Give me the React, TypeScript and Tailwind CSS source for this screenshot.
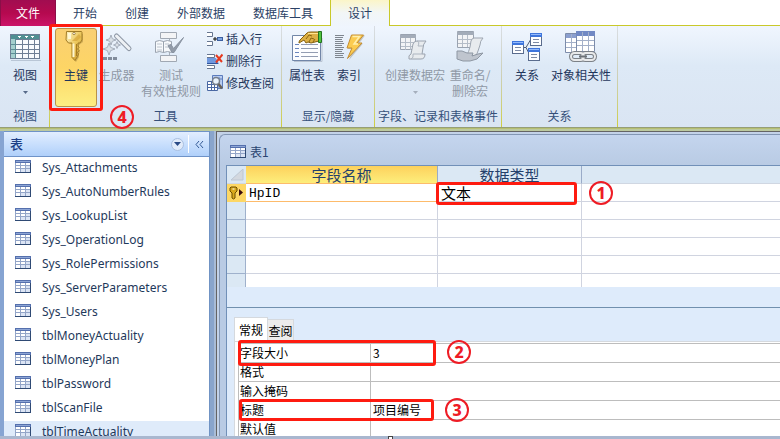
import { ReactNode } from 'react';
import clsx from 'clsx';

const tables = [
  'Sys_Attachments',
  'Sys_AutoNumberRules',
  'Sys_LookupList',
  'Sys_OperationLog',
  'Sys_RolePermissions',
  'Sys_ServerParameters',
  'Sys_Users',
  'tblMoneyActuality',
  'tblMoneyPlan',
  'tblPassword',
  'tblScanFile',
  'tblTimeActuality',
];

const menuTabs = ['开始', '创建', '外部数据', '数据库工具'];

/* ---------- icons ---------- */

function TableIcon() {
  return (
    <svg className="h-[14px] w-4 shrink-0" viewBox="0 0 16 14" shapeRendering="crispEdges">
      <rect width="16" height="13" fill="#93a5c8" />
      <rect width="16" height="3" fill="#5570ad" />
      <rect x="1" y="1" width="14" height="1" fill="#8ea6d6" />
      <path d="M1 3h4v2H1zM6 3h4v2H6zM11 3h4v2h-4zM1 6h4v2H1zM6 6h4v2H6zM1 9h4v3H1z" fill="#fff" />
      <path d="M11 6h4v2h-4zM6 9h4v3H6zM11 9h4v3h-4z" fill="#dbe4f4" />
      <path d="M0 12h16v1H0zM15 3h1v10h-1z" fill="#2f4a74" />
    </svg>
  );
}

function ViewIcon() {
  return (
    <svg className="h-8 w-8" viewBox="0 0 32 32" shapeRendering="crispEdges">
      <path d="M2 29h30V5" stroke="#b9c6d6" fill="none" />
      <rect x="1" y="3" width="30" height="25" fill="#6d7e95" />
      <rect x="2" y="4" width="28" height="4" fill="#4f8f92" />
      <rect x="2" y="8" width="4" height="19" fill="#a4cfce" />
      <path d="M6 9h7v4H6zM14 9h5v4h-5zM20 9h5v4h-5zM26 9h4v4h-4zM6 14h7v4H6zM14 14h5v4h-5zM20 14h5v4h-5zM26 14h4v4h-4zM6 19h7v3H6zM14 19h5v3h-5zM20 19h5v3h-5zM26 19h4v3h-4zM6 23h7v4H6zM14 23h5v4h-5zM20 23h5v4h-5zM26 23h4v4h-4z" fill="#f7fafd" />
      <path d="M6 8v19M2 13.500h4M2 18.500h4M2 22.500h4" stroke="#5d8f96" />
      <path d="M8 5h4l-2 2zM15 5h4l-2 2zM21 5h4l-2 2z" fill="#fff" />
    </svg>
  );
}

function KeyIcon() {
  return (
    <svg className="h-8 w-8" viewBox="0 0 32 32">
      <defs>
        <linearGradient id="gold" x1="0" y1="0" x2="1" y2="1">
          <stop offset="0" stopColor="#fdf3c4" />
          <stop offset="0.5" stopColor="#ecc75c" />
          <stop offset="1" stopColor="#c08d22" />
        </linearGradient>
      </defs>
      <path d="M7 3h16v8l-4 3v4l1 2-1 3v3l-3 5-3-3V14l-6-3z" fill="#a88a3c" opacity=".5" />
      <path d="M6.500.5h15l.5 1v7.500l-2 3h-2v3l1 1.500-1.500 1.500 1.500 1.500-1.500 2 1 1.500-1 2.500-2.500 4-3-3V12h-3.500l-2.500-3z" fill="url(#gold)" stroke="#a27c26" />
      <path d="M13.500 12.500V26" stroke="#fff6d0" strokeWidth="2" />
      <path d="M16.500 13v12" stroke="#a87b20" />
      <circle cx="14" cy="2.500" r="1.200" fill="#fff" stroke="#91702a" strokeWidth=".8" />
      <path d="M8 2h3v6H8z" fill="#fffbe4" opacity=".8" />
      <path d="M19 3l-7 7h5l4-4z" fill="#d6a53a" opacity=".7" />
    </svg>
  );
}

function BuilderIcon() {
  return (
    <svg className="h-8 w-8" viewBox="0 0 32 32">
      <path d="M15.500 5L28 17.500" stroke="#8f99a7" strokeWidth="5" strokeLinecap="round" />
      <path d="M15.500 5L28 17.500" stroke="#eef1f5" strokeWidth="3" strokeLinecap="round" />
      <path d="M10 4l1.300 3.700L15 9l-3.700 1.300L10 14l-1.300-3.700L5 9l3.700-1.300zM8 12l1.600 4.400L14 18l-4.400 1.600L8 24l-1.600-4.400L2 18l4.400-1.600zM16 10.500l1 2.500 2.500 1-2.500 1-1 2.500-1-2.500-2.500-1 2.500-1z" fill="#d9dfe6" stroke="#98a1ae" strokeWidth=".8" />
      <path d="M2 27.500h14" stroke="#828c9b" strokeWidth="3" strokeDasharray="4 1" />
    </svg>
  );
}

function TestIcon() {
  return (
    <svg className="h-8 w-8" viewBox="0 0 32 32">
      <path d="M14.500 8v16" stroke="#a7b0bb" />
      <path d="M5.500 1.500h16v6h-16zM5.500 24.500h16v6h-16z" fill="#f3f4f6" stroke="#a0a8b3" />
      <path d="M.5 10.500q4-2 8 0v11q-4-2-8 0zM8.500 10.500q4-2 8 0v11q-4-2-8 0z" fill="#f7f9fb" stroke="#9aa3af" />
      <path d="M2 13h5M2 16h5M2 19h5M10 13h4M10 16h4" stroke="#bcc4ce" />
      <path d="M13 14.500l3-1 2.500 4L28.500 6.500 19 21.500h-2z" fill="#939ca9" stroke="#8a94a2" />
    </svg>
  );
}

function InsertRowIcon() {
  return (
    <svg className="h-4 w-4" viewBox="0 0 16 16">
      <path d="M0 1.500h5.500v4H0M0 10.500h5.500v4H0" fill="#fff" stroke="#66758f" />
      <rect x="10.500" y="6.500" width="5" height="3" fill="#7fa6e2" stroke="#3d5f9f" />
      <path d="M6 8h4M8 6v4" stroke="#111" />
    </svg>
  );
}

function DeleteRowIcon() {
  return (
    <svg className="h-4 w-4" viewBox="0 0 16 16">
      <path d="M0 1.500h7.500v3H0M0 12.500h7.500v3H0" fill="#fff" stroke="#66758f" />
      <path d="M0 5h9l3 6H0z" fill="#6f98de" />
      <path d="M0 10.500h11" stroke="#31559c" />
      <path d="M9 2l6 7M15.500 1.500L9 9.500" stroke="#e5391f" strokeWidth="2" />
    </svg>
  );
}

function LookupIcon() {
  return (
    <svg className="h-4 w-4" viewBox="0 0 16 16">
      <path d="M5.500.5h10v13h-10z" fill="#b9cdf0" stroke="#5c7cbc" />
      <path d="M.5 6.500h10v9H.5zM.5 9.500h10M.5 12.500h10M4.500 7v8M7.500 7v8" fill="#fff" stroke="#4a68a3" />
      <path d="M12 2v11M6 4h9" stroke="#5c7cbc" />
      <circle cx="9" cy="6" r="3.500" fill="#e8f2fc" stroke="#777f8b" strokeWidth="1.500" />
      <path d="M11.500 9l3.500 4.500" stroke="#6b6257" strokeWidth="2.500" />
    </svg>
  );
}

function PropertyIcon() {
  return (
    <svg className="h-8 w-8" viewBox="0 0 32 32">
      <path d="M3 30.500h28V7" stroke="#b9c3d2" fill="none" />
      <path d="M1.500 4.500h28v25h-28z" fill="#fcfdff" stroke="#7186a8" />
      <path d="M4 13.500h4M4 17.500h4M4 21.500h4M4 25.500h4" stroke="#6a86bd" />
      <path d="M10 13.500h17M10 17.500h17M10 21.500h17M10 25.500h17" stroke="#929cb2" />
      <path d="M8 11l1-2 7-7q1-1 4-1h8v9l-4 1-4 1-3-1-2 1-2-3-5 3z" fill="#ddb044" stroke="#85600d" />
      <path d="M15 8l3-4 3 1M18 11l2-4 3 1M22 11l2-3" stroke="#8a6512" fill="none" />
      <path d="M17 2.500h10" stroke="#ffe591" />
      <path d="M27.500.5h3v11h-3z" fill="#4fc43f" stroke="#23731e" />
    </svg>
  );
}

function IndexIcon() {
  return (
    <svg className="h-8 w-8" viewBox="0 0 32 32">
      <path d="M2 4.500h9M2 6.500h8M2 8.500h7M2 10.500h8M2 12.500h9M2 14.500h7M2 16.500h9M2 18.500h8M2 20.500h7M2 22.500h9M2 24.500h8M2 26.500h9" stroke="#7f868f" />
      <path d="M19 4.500h13l-6 8h4L16 29l4-11h-5z" fill="#9a978b" opacity=".5" />
      <path d="M18.500 4h12L24 12h5L14.500 27.500 19 17h-5z" fill="#fbcb50" stroke="#c48d33" />
      <path d="M19.500 5.500h7L21 13h4" stroke="#ffefac" fill="none" strokeWidth="1.500" />
    </svg>
  );
}

function MacroIcon({ hand }: { hand?: boolean }) {
  return (
    <svg className="h-8 w-8" viewBox="0 0 32 32">
      {hand ? (
        <g>
          <path d="M3.500.5h16v16h-16z" fill="#f3f4f6" stroke="#9aa3b0" />
          <path d="M3 1h17v3H3z" fill="#a3acb9" />
          <path d="M4 8.500h15M4 12.500h15M8.500 4v12M13.500 4v12" stroke="#b5bdc8" />
          <path d="M17 10q1-3 3-3h9q-3 3-3 7l-2 6q-1 5-4 5h-8q3-4 4-9z" fill="#e8ebee" stroke="#9ea6b1" />
          <path d="M3 20h5l5 2h6l-1 3 6-2 5-1-6 6-7 2H9l-6-2z" fill="#bfc5ce" stroke="#8e97a3" />
        </g>
      ) : (
        <g>
          <path d="M1.500 3.500h15v15h-15z" fill="#f3f4f6" stroke="#9aa3b0" />
          <path d="M1 4h16v3H1z" fill="#a3acb9" />
          <path d="M2 11.500h14M2 15.500h14M6.500 7v12M11.500 7v12" stroke="#b5bdc8" />
          <path d="M14 13q1-3 4-3h9q-3 3-3 7l-1 6h3q0 5-4 5H10q-1-4 2-5z" fill="#e8ebee" stroke="#9aa2ae" />
          <path d="M18 10q3 1 1 5h5M23 23h-9q1 4-2 5" stroke="#adb5c0" fill="none" />
        </g>
      )}
    </svg>
  );
}

function RelationIcon() {
  return (
    <svg className="h-8 w-8" viewBox="0 0 32 32">
      <path d="M12 16.500h3L20 8M15 16.500l4 8" stroke="#4d5b73" fill="none" />
      {[[1, 10], [19, 2], [17, 17]].map(([x, y]) => (
        <g key={x}>
          <rect x={x + 0.5} y={y + 0.5} width="11" height="12" fill="#fff" stroke="#5a6c8d" />
          <rect x={x} y={y} width="12" height="4" fill="#3f76dc" />
          <path d={`M${x + 1} ${y + 1.5}h10`} stroke="#94bafb" />
          <path d={`M${x + 3} ${y + 6.5}h6M${x + 3} ${y + 9.5}h6`} stroke="#7e8ba5" />
        </g>
      ))}
    </svg>
  );
}

function DependencyIcon() {
  return (
    <svg className="h-8 w-8" viewBox="0 0 32 32">
      <path d="M.5 2.500h16v19H.5z" fill="#fff" stroke="#7d8caa" />
      <path d="M1 3h15v4H1z" fill="#8b9fcf" />
      <path d="M1 11.500h10M1 16.500h10M6.500 3v18" stroke="#a3b0c9" />
      <path d="M11.500.5h18v20h-18z" fill="#fff" stroke="#7d8caa" />
      <path d="M11 0h19v5H11z" fill="#7189c4" />
      <path d="M12 9.500h17M12 14.500h17M17.500 1v19M23.500 1v19" stroke="#a3b0c9" />
      <rect x="6" y="22" width="13" height="7" rx="3.500" fill="none" stroke="#7c8187" strokeWidth="4" />
      <rect x="17" y="22" width="13" height="7" rx="3.500" fill="none" stroke="#7c8187" strokeWidth="4" />
      <rect x="6" y="22" width="13" height="7" rx="3.500" fill="none" stroke="#e9eaeb" strokeWidth="2" />
      <rect x="17" y="22" width="13" height="7" rx="3.500" fill="none" stroke="#e9eaeb" strokeWidth="2" />
      <path d="M14 25.500h8" stroke="#6d7278" strokeWidth="2" />
    </svg>
  );
}

function RowKeyIcon() {
  return (
    <svg className="h-[14px] w-[18px]" viewBox="0 0 18 14">
      <path d="M4 1h5l1 1v3L8 7v5l-1.500 1L5 12V7L3 5V2z" fill="#d9a91c" stroke="#6b4d00" />
      <path d="M5.500 3h2" stroke="#fff" />
      <path d="M12 3l4 3.500-4 3.500z" fill="#3b0d0d" />
    </svg>
  );
}

/* ---------- ribbon ---------- */

function RibbonGroup({ label, className, children }: { label: string; className?: string; children: ReactNode }) {
  return (
    <section aria-label={label} className={clsx('flex shrink-0', className)}>
      <div className="flex min-w-0 flex-1 flex-col pt-0.5">
        <div className="flex flex-1 items-start">{children}</div>
        <div className="h-5 text-center leading-[18px] whitespace-nowrap text-[#35507a]">{label}</div>
      </div>
      <div className="w-px bg-linear-to-b from-[#d8dde4] via-[#cdcfb4] to-[#cfce3c]" />
    </section>
  );
}

interface RibbonButtonProps {
  icon: ReactNode;
  lines: string[];
  arrow?: boolean;
  disabled?: boolean;
  active?: boolean;
  className?: string;
}

function RibbonButton({ icon, lines, arrow, disabled, active, className }: RibbonButtonProps) {
  return (
    <button
      type="button"
      disabled={disabled}
      className={clsx(
        'flex h-[79px] shrink-0 flex-col items-center rounded-[3px] border pt-0.5 leading-4 whitespace-nowrap',
        active ? 'border-[#b8924a] bg-linear-to-b from-[#f9cf72] via-[#fdd565] to-[#fdee82]' : 'border-transparent',
        disabled ? 'text-[#8f98a5]' : 'text-[#1f365c]',
        className
      )}
    >
      {icon}
      <span className="mt-1 flex flex-col items-center">
        {lines.map((line) => (
          <span key={line}>{line}</span>
        ))}
      </span>
      {arrow && (
        <svg className="mt-2 h-[3px] w-[5px] opacity-70" viewBox="0 0 5 3">
          <path d="M0 0h5L2.500 3z" fill="currentColor" />
        </svg>
      )}
    </button>
  );
}

function SmallButton({ icon, label }: { icon: ReactNode; label: string }) {
  return (
    <button type="button" className="flex h-[22px] items-center gap-[3px] whitespace-nowrap text-[#1f365c]">
      {icon}
      {label}
    </button>
  );
}

/* ---------- annotations ---------- */

function RedBox({ className }: { className: string }) {
  return <div className={clsx('pointer-events-none absolute z-10 rounded-[3px] border-3 border-[#fe1b10]', className)} />;
}

function Step({ n, className }: { n: number; className: string }) {
  return (
    <span
      className={clsx(
        'absolute z-10 flex size-6 items-center justify-center rounded-full border-2 border-[#ee1c25] text-[#ee1c25]',
        className
      )}
    >
      <b className="font-['Noto_Sans',sans-serif] text-base leading-none font-extrabold">{n}</b>
    </span>
  );
}

function Ribbon() {
  return (
    <header className="relative shrink-0">
      <div className="flex h-[26px] items-stretch bg-white">
        <button type="button" className="w-14 border-x border-[#8a0f48] bg-linear-to-b from-[#a10d50] via-[#b5094f] to-[#cb1468] text-white">
          文件
        </button>
        <nav className="flex flex-1 border-b border-[#c9c92a] pl-[3px]">
          {menuTabs.map((tab) => (
            <button key={tab} type="button" className="px-[14px] text-[#2b4165]">
              {tab}
            </button>
          ))}
          <button
            type="button"
            className="-mb-px ml-[3px] border-x border-[#c9c92a] bg-linear-to-b from-[#fbf5c8] via-[#f2f6f7] to-[#eff5fd] px-[17px] text-[#2b4165]"
          >
            设计
          </button>
        </nav>
      </div>

      <div className="flex h-[101px] overflow-hidden bg-linear-to-b from-[#f0f6fe] via-[#dde9f6] via-40% to-[#dae5f3] pl-px">
        <RibbonGroup label="视图" className="w-[49px]">
          <RibbonButton icon={<ViewIcon />} lines={['视图']} arrow className="w-12" />
        </RibbonGroup>
        <RibbonGroup label="工具" className="w-[232px]">
          <RibbonButton icon={<KeyIcon />} lines={['主键']} active className="ml-[5px] w-[42px]" />
          <RibbonButton icon={<BuilderIcon />} lines={['生成器']} disabled className="w-[39px]" />
          <RibbonButton icon={<TestIcon />} lines={['测试', '有效性规则']} disabled className="w-[70px]" />
          <div className="flex flex-col pl-px">
            <SmallButton icon={<InsertRowIcon />} label="插入行" />
            <SmallButton icon={<DeleteRowIcon />} label="删除行" />
            <SmallButton icon={<LookupIcon />} label="修改查阅" />
          </div>
        </RibbonGroup>
        <RibbonGroup label="显示/隐藏" className="w-[93px]">
          <RibbonButton icon={<PropertyIcon />} lines={['属性表']} className="ml-[3px] w-11" />
          <RibbonButton icon={<IndexIcon />} lines={['索引']} className="w-10" />
        </RibbonGroup>
        <RibbonGroup label="字段、记录和表格事件" className="w-[127px]">
          <RibbonButton icon={<MacroIcon />} lines={['创建数据宏']} arrow disabled className="ml-[7px] w-[66px]" />
          <RibbonButton icon={<MacroIcon hand />} lines={['重命名/', '删除宏']} disabled className="w-11" />
        </RibbonGroup>
        <RibbonGroup label="关系" className="w-[116px]">
          <RibbonButton icon={<RelationIcon />} lines={['关系']} className="ml-[3px] w-11" />
          <RibbonButton icon={<DependencyIcon />} lines={['对象相关性']} className="w-16" />
        </RibbonGroup>
      </div>
      <div className="h-px bg-[#959e78]" />
      <div className="h-px bg-[#b7bf72]" />
      <div className="h-0.5 bg-[#bcc99f]" />

      <RedBox className="top-6 left-[49px] h-[87px] w-[54px]" />
      <Step n={4} className="top-[105px] left-[110px]" />
    </header>
  );
}

/* ---------- navigation pane ---------- */

function NavPane() {
  return (
    <aside className="flex w-[210px] shrink-0 flex-col border-x border-x-[#7093c4] border-l-4 border-l-[#86a4d2] bg-white">
      <div className="flex h-[26px] shrink-0 items-center border-y border-y-[#6f93c8] bg-linear-to-b from-[#e2eeff] to-[#b0d0fa] pl-1.5 text-[#1c3f87]">
        <h2 className="flex-1 text-[13px] font-medium">表</h2>
        <button type="button" aria-label="筛选" className="flex size-[13px] items-center justify-center rounded-full border border-[#a9bfe0] bg-[#e1ebfa]">
          <svg className="h-1 w-[7px]" viewBox="0 0 7 4">
            <path d="M0 0h7L3.500 4z" fill="#2a4a86" />
          </svg>
        </button>
        <div className="ml-1 h-[18px] w-px bg-white" />
        <button type="button" aria-label="折叠" className="flex w-5 justify-center">
          <svg className="h-[7px] w-[9px]" viewBox="0 0 9 7" fill="none" stroke="#345a96">
            <path d="M4 0L1 3.500 4 7M8 0L5 3.500 8 7" />
          </svg>
        </button>
      </div>
      <ul className="min-h-0 flex-1 overflow-hidden font-['Noto_Sans','Noto_Sans_CJK_SC',sans-serif] text-[#1e395b]">
        {tables.map((name) => (
          <li key={name}>
            <button
              type="button"
              className={clsx(
                'flex h-6 w-full items-start gap-[11px] pt-[3px] pl-[11px] text-xs leading-4',
                name === 'tblTimeActuality' && 'bg-[#dfebfa]'
              )}
            >
              <TableIcon />
              {name}
            </button>
          </li>
        ))}
      </ul>
    </aside>
  );
}

/* ---------- table designer ---------- */

function FieldGrid() {
  return (
    <div className="relative h-[122px] shrink-0 overflow-hidden border-t border-[#7190b8] bg-white">
      <table className="w-full table-fixed border-separate border-spacing-0 text-[15px] leading-[17px]">
        <colgroup>
          <col className="w-[19px]" />
          <col className="w-48" />
          <col className="w-36" />
          <col />
        </colgroup>
        <thead>
          <tr className="h-[18px] bg-[#dbe8f4] text-[#24406b]">
            <td className="border-b border-[#d0d7e2] p-0">
              <svg className="ml-1 h-3 w-[13px]" viewBox="0 0 13 12">
                <path d="M12 0v11H0z" fill="#d3d8df" stroke="#bcc6d3" />
              </svg>
            </td>
            <th className="border-r border-b border-r-[#9aabc8] border-b-[#fdbb6b] bg-linear-to-b from-[#fdd15c] to-[#fdee7c] p-0 font-normal">字段名称</th>
            <th className="border-r border-b border-r-[#9aabc8] border-b-[#d0d7e2] p-0 font-normal">数据类型</th>
            <th className="border-b border-[#d0d7e2] p-0" />
          </tr>
        </thead>
        <tbody>
          <tr className="h-[18px] text-black">
            <td className="bg-[#fdd765] p-0">
              <RowKeyIcon />
            </td>
            <td className="border-r border-b border-r-[#d0d4e0] border-b-[#fdbb6b] p-0">
              <input
                aria-label="字段名称"
                defaultValue="HpID"
                className="block h-[17px] w-full bg-transparent pt-0.5 pl-[3px] font-['Liberation_Mono',monospace] text-[13px] outline-none"
              />
            </td>
            <td className="border-r border-b border-[#d0d4e0] p-0">
              <select aria-label="数据类型" className="block h-[17px] w-full appearance-none bg-transparent pl-[3px] leading-[17px] outline-none">
                <option>文本</option>
              </select>
            </td>
            <td className="border-b border-[#d0d4e0] p-0" />
          </tr>
          {[1, 2, 3, 4, 5].map((row) => (
            <tr key={row} className="h-[18px]">
              <td className="border-r border-b border-[#9fb1cc] bg-[#dbe8f4] p-0" />
              <td className="border-r border-b border-[#d0d4e0] p-0" />
              <td className="border-r border-b border-[#d0d4e0] p-0" />
              <td className="border-b border-[#d0d4e0] p-0" />
            </tr>
          ))}
        </tbody>
      </table>
      <RedBox className="top-4 left-[209px] h-[23px] w-[141px]" />
      <Step n={1} className="top-[15px] left-[362px]" />
    </div>
  );
}

const properties = [
  { id: 'size', label: '字段大小', value: '3' },
  { id: 'format', label: '格式', value: '' },
  { id: 'mask', label: '输入掩码', value: '' },
  { id: 'caption', label: '标题', value: '项目编号' },
  { id: 'default', label: '默认值', value: '' },
];

function PropertySheet() {
  return (
    <div className="flex min-h-0 flex-1 flex-col overflow-hidden border-t border-[#7190ae] pt-[9px] pl-[7px]">
      <div className="flex h-6 shrink-0 items-end text-black">
        <button type="button" className="h-6 w-[34px] border border-b-0 border-[#d5d9de] bg-white">
          常规
        </button>
        <button type="button" className="h-[22px] w-[26px] border border-b-0 border-l-0 border-[#d5d9de] bg-[#ececec]">
          查阅
        </button>
      </div>
      <div className="relative flex-1 border-t border-l border-[#d5d9de] bg-white pt-px pl-[3px]">
        <table className="w-full table-fixed border-separate border-spacing-0 border-t border-l border-[#bdbdbd] leading-[18px] text-black">
          <colgroup>
            <col className="w-[132px]" />
            <col />
          </colgroup>
          <tbody>
            {properties.map((p) => (
              <tr key={p.id} className="h-[19px]">
                <th className="border-r border-b border-[#bdbdbd] p-0 pl-px text-left font-normal">
                  <label htmlFor={p.id} className="block h-[18px]">
                    {p.label}
                  </label>
                </th>
                <td className="border-b border-[#bdbdbd] p-0">
                  <input id={p.id} defaultValue={p.value} className="block h-[18px] w-full bg-transparent pl-0.5 outline-none" />
                </td>
              </tr>
            ))}
          </tbody>
        </table>
        <RedBox className="-top-0.5 left-[3px] h-[26px] w-[198px]" />
        <Step n={2} className="-top-0.5 left-[212px]" />
        <RedBox className="top-[57px] left-1 h-[22px] w-[195px]" />
        <Step n={3} className="top-14 left-[210px]" />
      </div>
    </div>
  );
}

function TableDesigner() {
  return (
    <main className="flex min-w-0 flex-1 border-t border-l border-[#646464] bg-[#c3d2e8] pt-0.5 pl-0.5">
      <div className="flex min-w-0 flex-1 flex-col rounded-tl-md border-t border-l border-[#8296b3] bg-linear-to-b from-[#c4d5ee] to-[#b9cbe4] to-[30px] pl-1.5">
        <div className="flex h-[30px] shrink-0 items-center gap-1 pt-1 pl-1 text-[#2a4470]">
          <TableIcon />
          <h1 className="text-xs">表1</h1>
        </div>
        <div className="flex min-h-0 flex-1 flex-col border-l border-[#7190b8] bg-[#deebfb]">
          <FieldGrid />
          <div className="h-5 shrink-0" />
          <PropertySheet />
        </div>
      </div>
    </main>
  );
}

export default function App() {
  return (
    <div className="flex h-screen flex-col overflow-hidden bg-[#b5c9e3] font-['Noto_Sans_CJK_SC',sans-serif] text-xs">
      <Ribbon />
      <div className="flex min-h-0 flex-1">
        <NavPane />
        <div className="w-1.5 shrink-0 border-r-2 border-[#a9bcd6] bg-[#89a5cc]" />
        <TableDesigner />
      </div>
      <footer className="flex h-[3px] shrink-0 justify-center bg-[#a9b7cf]">
        <div className="w-[5px] border border-b-0 border-[#444] bg-white" />
      </footer>
    </div>
  );
}
